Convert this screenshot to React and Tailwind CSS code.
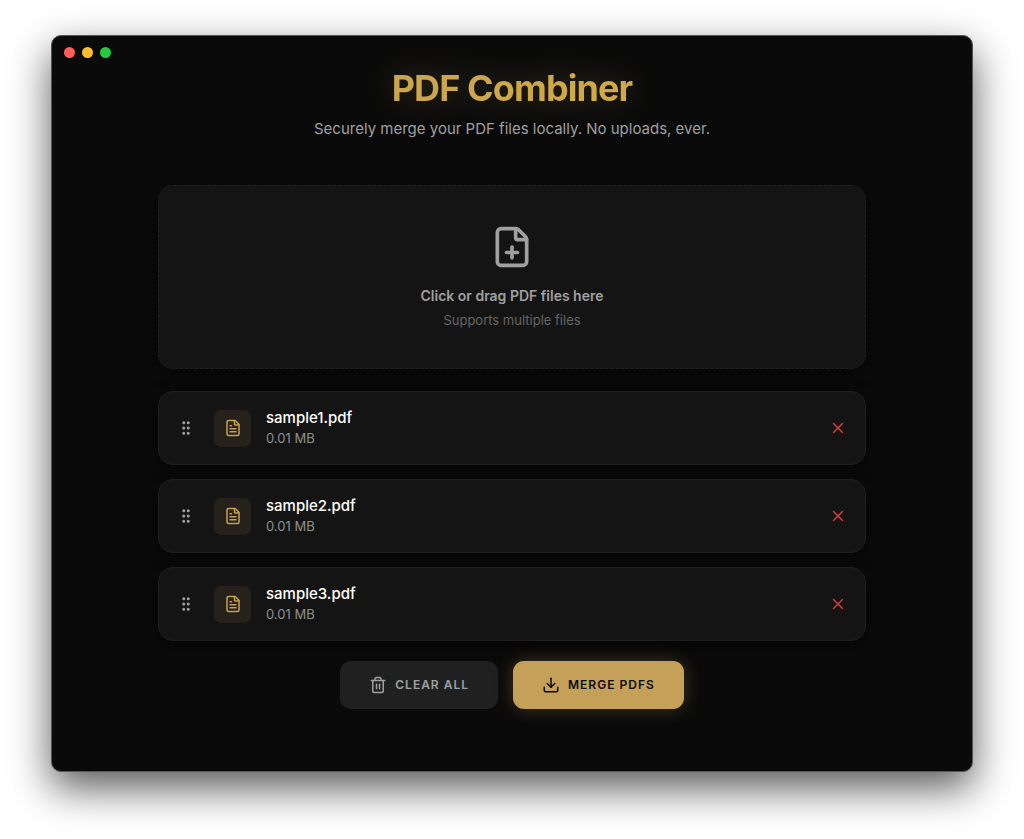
// App.jsx
import React, {useState} from "react";
import {Download, FilePlus, FileText, GripVertical, Trash2, X} from "lucide-react";

const SAMPLE_FILES = [
    {id: 1, name: "sample1.pdf", size: "0.01 MB"},
    {id: 2, name: "sample2.pdf", size: "0.01 MB"},
    {id: 3, name: "sample3.pdf", size: "0.01 MB"},
];

function TrafficLights() {
    return (
        <div className="flex gap-[7px] px-3 pt-[11px]">
            <span className="size-[11px] rounded-full bg-[#ff5f57]"/>
            <span className="size-[11px] rounded-full bg-[#febc2e]"/>
            <span className="size-[11px] rounded-full bg-[#28c840]"/>
        </div>
    );
}

function DropZone() {
    return (
        <label
            className="flex flex-col items-center rounded-[15px] border border-dashed border-[#222222] bg-[#141414] pt-[39px] pb-9 shadow-[0_4px_15px_rgba(0,0,0,0.5)] cursor-pointer">
            <input type="file" accept="application/pdf" multiple className="sr-only"/>
            <FilePlus size={44} className="text-[#a0a0a0]"/>
            <span className="mt-[15px] text-sm leading-6 font-semibold text-[#a0a0a0]">
                Click or drag PDF files here
            </span>
            <span className="text-[13px] leading-6 text-[#666666]">
                Supports multiple files
            </span>
        </label>
    );
}

function FileRow({file, onRemove}) {
    return (
        <li className="flex items-center rounded-[15px] border border-[#1f1f1f] bg-[#141414] px-[18px] py-4 shadow-[0_4px_15px_rgba(0,0,0,0.5)]">
            <GripVertical size={18} className="text-[#a0a0a0] cursor-grab"/>
            <div className="ml-[19px] flex size-[37px] items-center justify-center rounded-[7px] bg-[#26211a]">
                <FileText size={18} className="text-[#c5a059]"/>
            </div>
            <div className="ml-[15px] flex-1">
                <p className="text-[15px] leading-5 font-medium text-white">{file.name}</p>
                <p className="text-[13px] leading-5 text-[#8f8f8f]">{file.size}</p>
            </div>
            <button type="button" aria-label={`Remove ${file.name}`} onClick={onRemove}>
                <X size={18} className="text-[#d63c3c]"/>
            </button>
        </li>
    );
}

export default function App() {
    const [files, setFiles] = useState(SAMPLE_FILES);

    return (
        <div className="bg-white px-[51px] pt-[35px] pb-[67px] font-['Inter',sans-serif]">
            {/* App window */}
            <div
                className="rounded-[10px] border border-[#555555] bg-[#0a0a0a] pb-[62px] shadow-[0_16px_40px_rgba(0,0,0,0.65)]">
                <TrafficLights/>

                <div className="mx-auto max-w-[708px]">
                    <header className="pt-2 text-center">
                        <h1 className="bg-linear-to-r from-[#c5a059] to-[#d4af37] bg-clip-text text-[36px] leading-[44px] font-bold tracking-tight text-transparent drop-shadow-[0_0_15px_rgba(197,160,89,0.3)]">
                            PDF Combiner
                        </h1>
                        <p className="mt-[7px] text-[15px] leading-6 text-[#a0a0a0]">
                            Securely merge your PDF files locally. No uploads, ever.
                        </p>
                    </header>

                    <main className="mt-11">
                        <DropZone/>

                        <ul className="mt-[22px] flex flex-col gap-3.5">
                            {files.map((file) => (
                                <FileRow
                                    key={file.id}
                                    file={file}
                                    onRemove={() => setFiles(files.filter((f) => f.id !== file.id))}
                                />
                            ))}
                        </ul>

                        <div className="mt-5 flex justify-center gap-[15px]">
                            <button
                                type="button"
                                onClick={() => setFiles([])}
                                className="flex h-12 items-center gap-2 rounded-[11px] bg-[#202020] px-[29px] text-xs font-semibold tracking-[1px] text-[#a0a0a0]"
                            >
                                <Trash2 size={18}/>
                                CLEAR ALL
                            </button>
                            <button
                                type="button"
                                className="flex h-12 items-center gap-2 rounded-[11px] bg-[#c5a059] px-[29px] text-xs font-semibold tracking-[1px] text-[#0a0a0a] shadow-[0_0_18px_rgba(197,160,89,0.3)]"
                            >
                                <Download size={18}/>
                                MERGE PDFS
                            </button>
                        </div>
                    </main>
                </div>
            </div>
        </div>
    );
}
